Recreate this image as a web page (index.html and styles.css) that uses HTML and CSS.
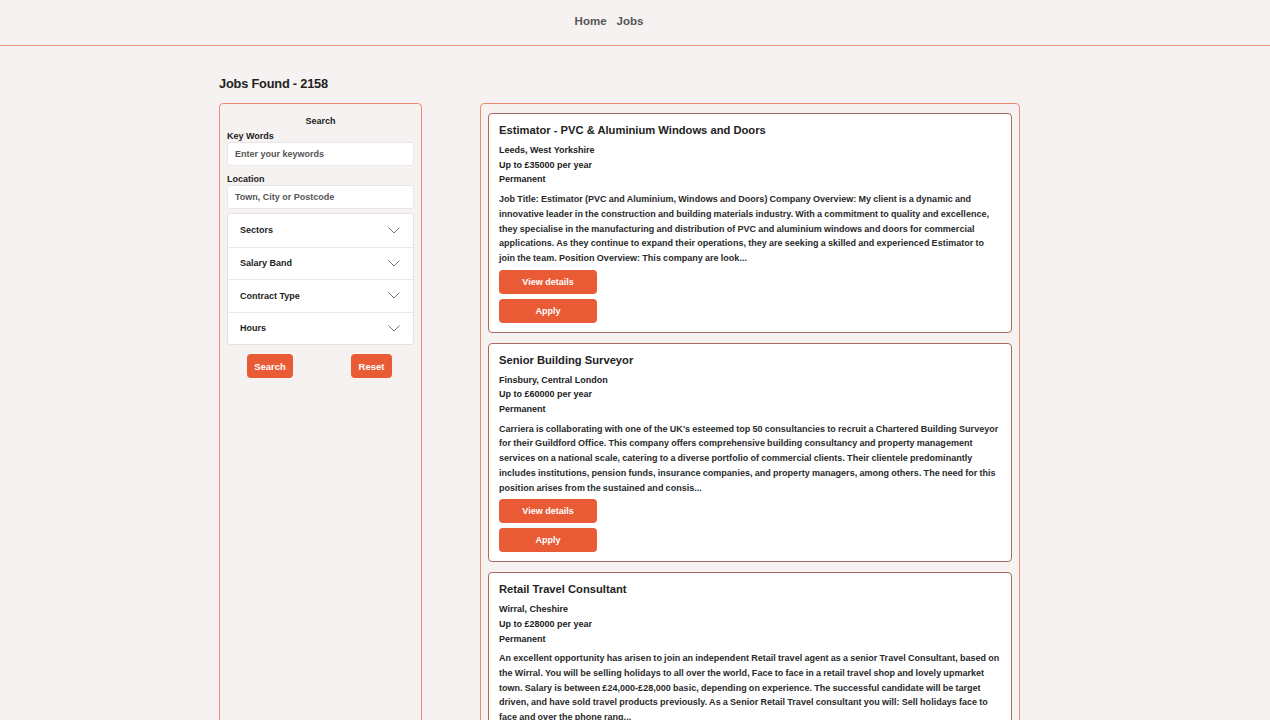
FILE: index.html
```html
<!DOCTYPE html>
<html lang="en">
<head>
<meta charset="utf-8">
<title>Jobs</title>
<link rel="stylesheet" href="styles.css">
</head>
<body>
<header class="topbar">
  <nav class="nav">
    <a class="nav-link" href="#">Home</a>
    <a class="nav-link" href="#">Jobs</a>
  </nav>
</header>
<main class="page">
  <h1 class="count">Jobs Found - 2158</h1>
  <div class="layout">
    <aside class="filters">
      <div class="filters-title">Search</div>
      <label class="field-label">Key Words</label>
      <input class="field" type="text" placeholder="Enter your keywords">
      <label class="field-label">Location</label>
      <input class="field" type="text" placeholder="Town, City or Postcode">
      <div class="accordion">
        <div class="acc-item"><span>Sectors</span><svg class="chev" viewBox="0 0 12 7"><path d="M0.5 0.5 L6 6 L11.5 0.5"/></svg></div>
        <div class="acc-item"><span>Salary Band</span><svg class="chev" viewBox="0 0 12 7"><path d="M0.5 0.5 L6 6 L11.5 0.5"/></svg></div>
        <div class="acc-item"><span>Contract Type</span><svg class="chev" viewBox="0 0 12 7"><path d="M0.5 0.5 L6 6 L11.5 0.5"/></svg></div>
        <div class="acc-item"><span>Hours</span><svg class="chev" viewBox="0 0 12 7"><path d="M0.5 0.5 L6 6 L11.5 0.5"/></svg></div>
      </div>
      <div class="filter-actions">
        <button class="btn btn-search">Search</button>
        <button class="btn btn-reset">Reset</button>
      </div>
    </aside>
    <section class="results">
      <article class="card">
        <h2 class="card-title">Estimator - PVC &amp; Aluminium Windows and Doors</h2>
        <div class="meta">Leeds, West Yorkshire</div>
        <div class="meta">Up to £35000 per year</div>
        <div class="meta">Permanent</div>
        <p class="desc">Job Title: Estimator (PVC and Aluminium, Windows and Doors) Company Overview: My client is a dynamic and innovative leader in the construction and building materials industry. With a commitment to quality and excellence, they specialise in the manufacturing and distribution of PVC and aluminium windows and doors for commercial applications. As they continue to expand their operations, they are seeking a skilled and experienced Estimator to join the team. Position Overview: This company are look...</p>
        <div class="card-actions">
          <button class="btn btn-wide">View details</button>
          <button class="btn btn-wide">Apply</button>
        </div>
      </article>
      <article class="card">
        <h2 class="card-title">Senior Building Surveyor</h2>
        <div class="meta">Finsbury, Central London</div>
        <div class="meta">Up to £60000 per year</div>
        <div class="meta">Permanent</div>
        <p class="desc">Carriera is collaborating with one of the UK's esteemed top 50 consultancies to recruit a Chartered Building Surveyor for their Guildford Office. This company offers comprehensive building consultancy and property management services on a national scale, catering to a diverse portfolio of commercial clients. Their clientele predominantly includes institutions, pension funds, insurance companies, and property managers, among others. The need for this position arises from the sustained and consis...</p>
        <div class="card-actions">
          <button class="btn btn-wide">View details</button>
          <button class="btn btn-wide">Apply</button>
        </div>
      </article>
      <article class="card">
        <h2 class="card-title">Retail Travel Consultant</h2>
        <div class="meta">Wirral, Cheshire</div>
        <div class="meta">Up to £28000 per year</div>
        <div class="meta">Permanent</div>
        <p class="desc">An excellent opportunity has arisen to join an independent Retail travel agent as a senior Travel Consultant, based on the Wirral. You will be selling holidays to all over the world, Face to face in a retail travel shop and lovely upmarket town. Salary is between £24,000-£28,000 basic, depending on experience. The successful candidate will be target driven, and have sold travel products previously. As a Senior Retail Travel consultant you will: Sell holidays face to face and over the phone rang...</p>
        <div class="card-actions">
          <button class="btn btn-wide">View details</button>
          <button class="btn btn-wide">Apply</button>
        </div>
      </article>
    </section>
  </div>
</main>
</body>
</html>
```
FILE: styles.css
```css
* { box-sizing: border-box; }
html, body { margin: 0; }
body {
  background: #f6f2f1;
  font-family: "Liberation Sans", Arial, sans-serif;
  font-weight: 700;
  color: #222;
}
.topbar {
  height: 46px;
  border-bottom: 1px solid #eb9478;
  display: flex;
  justify-content: center;
}
.nav {
  display: flex;
  gap: 10px;
  margin-left: -52px;
  padding-top: 14px;
}
.nav-link {
  color: #555;
  text-decoration: none;
  font-size: 11.5px;
  line-height: 14px;
}
.page {
  padding-left: 219px;
  padding-top: 29px;
}
.count {
  margin: 0 0 10px 0;
  font-size: 12.8px;
  letter-spacing: -0.2px;
  line-height: 18px;
  color: #222;
}
.layout {
  display: flex;
  gap: 58px;
  align-items: flex-start;
}
.filters {
  width: 203px;
  min-height: 640px;
  border: 1px solid #ee8c70;
  border-radius: 4px;
  padding: 11px 7px 10px 7px;
  display: flex;
  flex-direction: column;
}
.filters-title {
  text-align: center;
  font-size: 9px;
  line-height: 12px;
  margin-bottom: 3px;
}
.field-label {
  font-size: 9px;
  line-height: 12px;
}
.field {
  height: 24px;
  border: 1px solid #ebe7e6;
  border-radius: 3px;
  background: #fff;
  padding: 0 7px;
  font-family: inherit;
  font-weight: 700;
  font-size: 9px;
  color: #333;
  margin-bottom: 7px;
  outline: none;
}
.field::placeholder { color: #555; }
.accordion {
  margin-top: -3px;
  background: #fff;
  border: 1px solid #e6e2e1;
  border-radius: 3px;
}
.acc-item {
  height: 32.5px;
  display: flex;
  align-items: center;
  justify-content: space-between;
  padding: 0 13px 0 12px;
  font-size: 9px;
  border-top: 1px solid #ebe7e6;
}
.acc-item:first-child { border-top: 0; }
.chev {
  width: 12px;
  height: 7px;
  fill: none;
  stroke: #777;
  stroke-width: 1;
}
.filter-actions {
  display: flex;
  justify-content: space-between;
  padding: 0 22px 0 20px;
  margin-top: 9px;
}
.btn {
  background: #e85b35;
  color: #fff;
  border: 0;
  border-radius: 4px;
  height: 24px;
  font-family: inherit;
  font-weight: 700;
  font-size: 9px;
  padding: 0;
  cursor: pointer;
}
.btn-search { width: 46px; font-size: 9.5px; }
.btn-reset { width: 41px; font-size: 9.5px; }
.results {
  width: 540px;
  border: 1px solid #ee8c70;
  border-radius: 4px;
  padding: 9px 7px;
  display: flex;
  flex-direction: column;
  gap: 10px;
}
.card {
  background: #fff;
  border: 1px solid #a86b5d;
  border-radius: 4px;
  padding: 8px 10px 9px 10px;
}
.card-title {
  margin: 0 0 5px 0;
  font-size: 11.2px;
  line-height: 16px;
  color: #222;
}
.meta {
  font-size: 9px;
  line-height: 14.7px;
  color: #222;
}
.desc {
  margin: 5px 0 4px 0;
  font-size: 9px;
  line-height: 14.7px;
  letter-spacing: 0.03px;
  word-spacing: -0.35px;
  color: #2a2a2a;
}
.card-actions {
  display: flex;
  flex-direction: column;
  gap: 5px;
}
.btn-wide { width: 98px; }
```
